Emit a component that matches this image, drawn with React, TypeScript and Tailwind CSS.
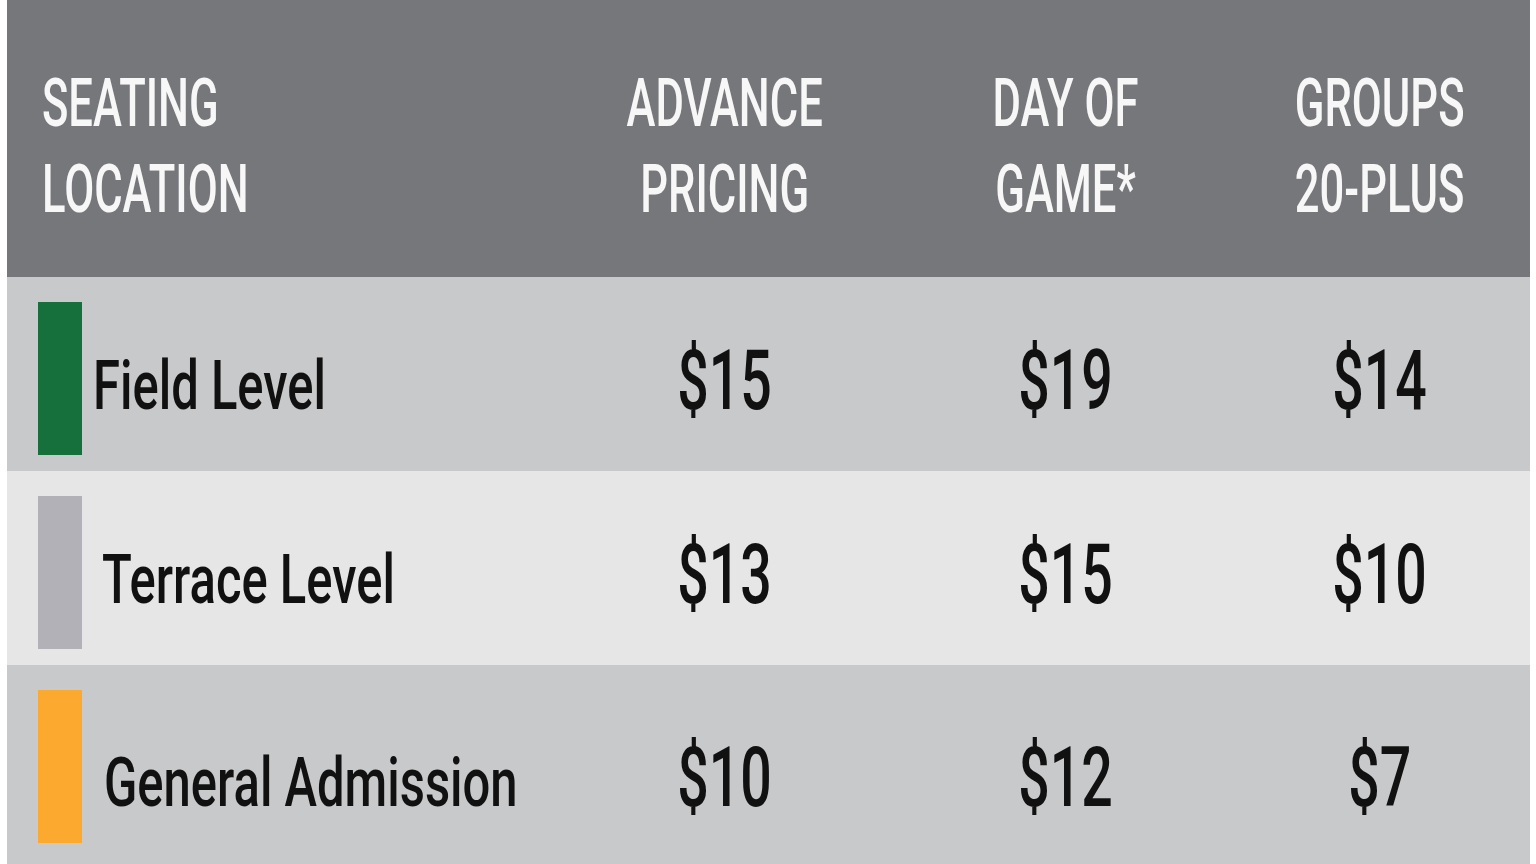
import React from "react";

const rows = [
  { label: "Field Level", swatch: "bg-[#15703b]", bg: "bg-[#c8c9cb]", labelPad: "pl-[11px]", prices: ["$15", "$19", "$14"] },
  { label: "Terrace Level", swatch: "bg-[#b2b1b8]", bg: "bg-[#e6e6e6]", labelPad: "pl-[20px]", prices: ["$13", "$15", "$10"] },
  { label: "General Admission", swatch: "bg-[#fbaa2f]", bg: "bg-[#c8c9cb]", labelPad: "pl-[22px]", prices: ["$10", "$12", "$7"] },
];

const cols = ["w-[330px]", "w-[352px]", "w-[276px]"];

const font = "font-['Roboto',sans-serif]";

const App = () => {
  return (
    <div className={`w-full h-[864px] bg-white pl-[7px] pr-[6px] overflow-hidden ${font}`}>
      {/* Header */}
      <div className="flex h-[277px] bg-[#76777b] pt-[61px] text-[66px] leading-[86px] font-medium text-[#f7f7f7]">
        <div className="w-[553px] pl-[35px]">
          <span className="inline-block origin-left scale-x-[0.66]">
            SEATING
            <br />
            LOCATION
          </span>
        </div>
        {[
          ["ADVANCE", "PRICING"],
          ["DAY OF", "GAME*"],
          ["GROUPS", "20-PLUS"],
        ].map((h, i) => (
          <div key={i} className={`${cols[i]} flex justify-center text-center`}>
            <span className="inline-block origin-center scale-x-[0.66] whitespace-nowrap">
              {h[0]}
              <br />
              {h[1]}
            </span>
          </div>
        ))}
      </div>

      {/* Rows */}
      {rows.map((r, idx) => (
        <div
          key={r.label}
          className={`flex ${r.bg} ${idx === 2 ? "h-[199px]" : "h-[194px]"} text-[#111111]`}
        >
          <div className="w-[553px] flex items-start pl-[31px] pt-[25px]">
            <div className={`w-[44px] h-[153px] shrink-0 ${r.swatch}`} />
            <div
              className={`${r.labelPad} ${idx === 2 ? "pt-[59px]" : "pt-[50px]"} text-[68px] leading-none font-medium whitespace-nowrap`}
            >
              <span className="inline-block origin-left scale-x-[0.72]">{r.label}</span>
            </div>
          </div>
          {r.prices.map((p, i) => (
            <div
              key={i}
              className={`${cols[i]} flex justify-center ${idx === 2 ? "pt-[71px]" : "pt-[62px]"} text-[84px] leading-none font-medium`}
            >
              <span className="inline-block origin-center scale-x-[0.66]">{p}</span>
            </div>
          ))}
        </div>
      ))}
    </div>
  );
};

export default App;
